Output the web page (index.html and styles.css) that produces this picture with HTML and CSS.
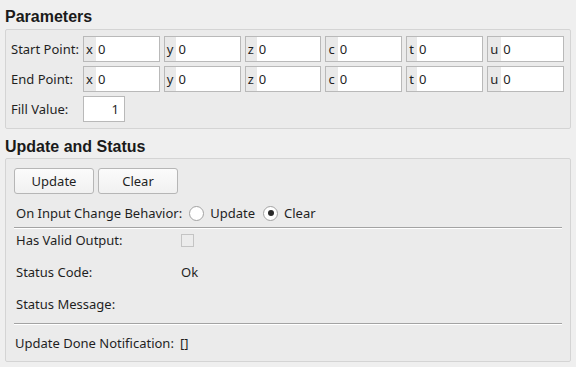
FILE: index.html
```html
<!DOCTYPE html>
<html>
<head>
	<title>Parameters</title>
	<link rel="stylesheet" href="styles.css">
</head>
<body>
	<div class="page">
		<h2 class="group_title">Parameters</h2>
		<div class="group params">
			<div class="param_row">
				<span class="param_label">Start Point:</span>
				<div class="fields">
					<div class="field"><span class="prefix">x</span><input type="text" value="0"></div>
					<div class="field"><span class="prefix">y</span><input type="text" value="0"></div>
					<div class="field"><span class="prefix">z</span><input type="text" value="0"></div>
					<div class="field"><span class="prefix">c</span><input type="text" value="0"></div>
					<div class="field"><span class="prefix">t</span><input type="text" value="0"></div>
					<div class="field"><span class="prefix">u</span><input type="text" value="0"></div>
				</div>
			</div>
			<div class="param_row">
				<span class="param_label">End Point:</span>
				<div class="fields">
					<div class="field"><span class="prefix">x</span><input type="text" value="0"></div>
					<div class="field"><span class="prefix">y</span><input type="text" value="0"></div>
					<div class="field"><span class="prefix">z</span><input type="text" value="0"></div>
					<div class="field"><span class="prefix">c</span><input type="text" value="0"></div>
					<div class="field"><span class="prefix">t</span><input type="text" value="0"></div>
					<div class="field"><span class="prefix">u</span><input type="text" value="0"></div>
				</div>
			</div>
			<div class="param_row">
				<span class="param_label">Fill Value:</span>
				<div class="field fill_field"><input type="text" class="fill_input" value="1"></div>
			</div>
		</div>

		<h2 class="group_title second">Update and Status</h2>
		<div class="group status">
			<div class="button_row">
				<button class="push">Update</button>
				<button class="push">Clear</button>
			</div>
			<div class="radio_row">
				<span>On Input Change Behavior:</span>
				<span class="radio"></span><span class="radio_text">Update</span>
				<span class="radio checked"></span><span class="radio_text">Clear</span>
			</div>
			<div class="separator"></div>
			<div class="info_grid">
				<span class="info_label">Has Valid Output:</span>
				<span class="info_value"><span class="checkbox"></span></span>
				<span class="info_label">Status Code:</span>
				<span class="info_value">Ok</span>
				<span class="info_label">Status Message:</span>
				<span class="info_value"></span>
			</div>
			<div class="separator lower"></div>
			<div class="notify_row">
				<span class="notify_label">Update Done Notification:</span>
				<span>[]</span>
			</div>
		</div>
	</div>
</body>
</html>
```

FILE: styles.css
```css
*{
	margin: 0px;
	padding: 0px;
	box-sizing: border-box;
}
body
{
	background-color: #efefef;
	color: #1f1f1f;
	font-family: "Noto Sans", "Open Sans", sans-serif;
	font-size: 13px;
}
.page
{
	padding: 0px 5px;
}
.group_title
{
	font-family: "Liberation Sans", Arial, sans-serif;
	font-weight: bold;
	font-size: 16px;
	line-height: 20px;
	margin-top: 7px;
	margin-bottom: 2px;
	color: #1a1a1a;
}
.group_title.second
{
	margin-top: 8px;
	margin-bottom: 1px;
}
.group
{
	background-color: #ebebeb;
	border: 1px solid #d4d4d4;
	border-radius: 2px;
}
.params
{
	padding: 6px 6px 6px 5px;
	display: flex;
	flex-direction: column;
	gap: 4px;
}
.param_row
{
	display: flex;
	align-items: center;
	height: 26px;
}
.param_label
{
	width: 72px;
	flex: none;
}
.fields
{
	display: flex;
	flex: 1;
	gap: 4px;
}
.field
{
	flex: 1;
	display: flex;
	height: 26px;
	background-color: #fff;
	border: 1px solid #b9b9b9;
}
.prefix
{
	background-color: #e9e9e9;
	padding: 0px 3px 0px 2px;
	line-height: 24px;
}
.field input
{
	border: none;
	outline: none;
	background: #fff;
	font: inherit;
	color: #1f1f1f;
	width: 100%;
	min-width: 0;
	padding-left: 2px;
}
.fill_field
{
	flex: none;
	width: 42px;
}
.fill_input
{
	text-align: right;
	padding-right: 5px;
}
.status
{
	padding: 9px 8px 7px 8px;
}
.button_row
{
	display: flex;
	gap: 4px;
}
.push
{
	width: 80px;
	height: 26px;
	font: inherit;
	color: #1f1f1f;
	border: 1px solid #b6b6b6;
	border-radius: 3px;
	background: linear-gradient(#fbfbfb, #f1f1f1);
}
.radio_row
{
	display: flex;
	align-items: center;
	height: 20px;
	margin-top: 9px;
	padding-left: 2px;
}
.radio
{
	width: 15px;
	height: 15px;
	border: 1px solid #a2a2a2;
	border-radius: 50%;
	background-color: #fff;
	margin-left: 7px;
	margin-right: 6px;
	display: flex;
	align-items: center;
	justify-content: center;
}
.radio.checked::after
{
	content: "";
	width: 6px;
	height: 6px;
	border-radius: 50%;
	background-color: #2a2a2a;
}
.radio + .radio_text + .radio
{
	margin-left: 8px;
}
.separator
{
	height: 2px;
	border-top: 1px solid #a3a3a3;
	border-bottom: 1px solid #fff;
	margin-top: 4px;
}
.info_grid
{
	display: grid;
	grid-template-columns: 164px 1fr;
	grid-auto-rows: 22px;
	row-gap: 10px;
	align-items: center;
	padding-left: 2px;
}
.info_value
{
	display: flex;
	align-items: center;
	padding-left: 1px;
}
.checkbox
{
	width: 13px;
	height: 13px;
	border: 1px solid #c4c4c4;
	background-color: #ececec;
}
.separator.lower
{
	margin-top: 8px;
}
.notify_row
{
	display: flex;
	align-items: center;
	height: 22px;
	margin-top: 7px;
	padding-left: 1px;
}
.notify_label
{
	width: 165px;
}
```
